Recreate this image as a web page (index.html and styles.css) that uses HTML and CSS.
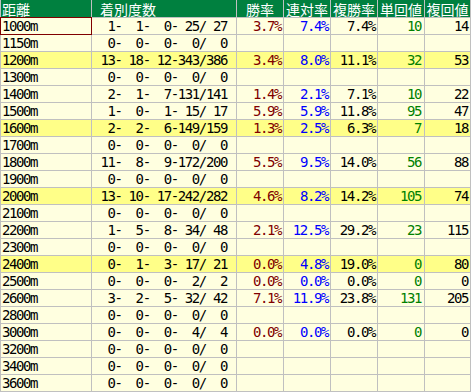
FILE: index.html
```html
<!DOCTYPE html>
<html lang="ja">
<head>
<meta charset="utf-8">
<title>距離別成績</title>
<link rel="stylesheet" href="styles.css">
</head>
<body>
<div class="table">
  <div class="row head">
    <div class="c name">距離</div>
    <div class="c rec">着別度数</div>
    <div class="c hc">勝率</div>
    <div class="c hc">連対率</div>
    <div class="c hc">複勝率</div>
    <div class="c hc">単回値</div>
    <div class="c hc">複回値</div>
  </div>
  <div class="row"><div class="c name sel">1000m</div><div class="c rec"> 1-  1-  0- 25/ 27</div><div class="c num win">3.7%</div><div class="c num ren">7.4%</div><div class="c num">7.4%</div><div class="c num tan">10</div><div class="c num fuk">14</div></div>
  <div class="row"><div class="c name">1150m</div><div class="c rec"> 0-  0-  0-  0/  0</div><div class="c"></div><div class="c"></div><div class="c"></div><div class="c"></div><div class="c"></div></div>
  <div class="row hl"><div class="c name">1200m</div><div class="c rec">13- 18- 12-343/386</div><div class="c num win">3.4%</div><div class="c num ren">8.0%</div><div class="c num">11.1%</div><div class="c num tan">32</div><div class="c num fuk">53</div></div>
  <div class="row"><div class="c name">1300m</div><div class="c rec"> 0-  0-  0-  0/  0</div><div class="c"></div><div class="c"></div><div class="c"></div><div class="c"></div><div class="c"></div></div>
  <div class="row"><div class="c name">1400m</div><div class="c rec"> 2-  1-  7-131/141</div><div class="c num win">1.4%</div><div class="c num ren">2.1%</div><div class="c num">7.1%</div><div class="c num tan">10</div><div class="c num fuk">22</div></div>
  <div class="row"><div class="c name">1500m</div><div class="c rec"> 1-  0-  1- 15/ 17</div><div class="c num win">5.9%</div><div class="c num ren">5.9%</div><div class="c num">11.8%</div><div class="c num tan">95</div><div class="c num fuk">47</div></div>
  <div class="row hl"><div class="c name">1600m</div><div class="c rec"> 2-  2-  6-149/159</div><div class="c num win">1.3%</div><div class="c num ren">2.5%</div><div class="c num">6.3%</div><div class="c num tan">7</div><div class="c num fuk">18</div></div>
  <div class="row"><div class="c name">1700m</div><div class="c rec"> 0-  0-  0-  0/  0</div><div class="c"></div><div class="c"></div><div class="c"></div><div class="c"></div><div class="c"></div></div>
  <div class="row"><div class="c name">1800m</div><div class="c rec">11-  8-  9-172/200</div><div class="c num win">5.5%</div><div class="c num ren">9.5%</div><div class="c num">14.0%</div><div class="c num tan">56</div><div class="c num fuk">88</div></div>
  <div class="row"><div class="c name">1900m</div><div class="c rec"> 0-  0-  0-  0/  0</div><div class="c"></div><div class="c"></div><div class="c"></div><div class="c"></div><div class="c"></div></div>
  <div class="row hl"><div class="c name">2000m</div><div class="c rec">13- 10- 17-242/282</div><div class="c num win">4.6%</div><div class="c num ren">8.2%</div><div class="c num">14.2%</div><div class="c num tan">105</div><div class="c num fuk">74</div></div>
  <div class="row"><div class="c name">2100m</div><div class="c rec"> 0-  0-  0-  0/  0</div><div class="c"></div><div class="c"></div><div class="c"></div><div class="c"></div><div class="c"></div></div>
  <div class="row"><div class="c name">2200m</div><div class="c rec"> 1-  5-  8- 34/ 48</div><div class="c num win">2.1%</div><div class="c num ren">12.5%</div><div class="c num">29.2%</div><div class="c num tan">23</div><div class="c num fuk">115</div></div>
  <div class="row"><div class="c name">2300m</div><div class="c rec"> 0-  0-  0-  0/  0</div><div class="c"></div><div class="c"></div><div class="c"></div><div class="c"></div><div class="c"></div></div>
  <div class="row hl"><div class="c name">2400m</div><div class="c rec"> 0-  1-  3- 17/ 21</div><div class="c num win">0.0%</div><div class="c num ren">4.8%</div><div class="c num">19.0%</div><div class="c num tan">0</div><div class="c num fuk">80</div></div>
  <div class="row"><div class="c name">2500m</div><div class="c rec"> 0-  0-  0-  2/  2</div><div class="c num win">0.0%</div><div class="c num ren">0.0%</div><div class="c num">0.0%</div><div class="c num tan">0</div><div class="c num fuk">0</div></div>
  <div class="row"><div class="c name">2600m</div><div class="c rec"> 3-  2-  5- 32/ 42</div><div class="c num win">7.1%</div><div class="c num ren">11.9%</div><div class="c num">23.8%</div><div class="c num tan">131</div><div class="c num fuk">205</div></div>
  <div class="row"><div class="c name">2800m</div><div class="c rec"> 0-  0-  0-  0/  0</div><div class="c"></div><div class="c"></div><div class="c"></div><div class="c"></div><div class="c"></div></div>
  <div class="row"><div class="c name">3000m</div><div class="c rec"> 0-  0-  0-  4/  4</div><div class="c num win">0.0%</div><div class="c num ren">0.0%</div><div class="c num">0.0%</div><div class="c num tan">0</div><div class="c num fuk">0</div></div>
  <div class="row"><div class="c name">3200m</div><div class="c rec"> 0-  0-  0-  0/  0</div><div class="c"></div><div class="c"></div><div class="c"></div><div class="c"></div><div class="c"></div></div>
  <div class="row"><div class="c name">3400m</div><div class="c rec"> 0-  0-  0-  0/  0</div><div class="c"></div><div class="c"></div><div class="c"></div><div class="c"></div><div class="c"></div></div>
  <div class="row"><div class="c name">3600m</div><div class="c rec"> 0-  0-  0-  0/  0</div><div class="c"></div><div class="c"></div><div class="c"></div><div class="c"></div><div class="c"></div></div>
</div>
</body>
</html>
```
FILE: styles.css
```css
html, body {
  margin: 0;
  padding: 0;
  background: #ffffff;
}

.table {
  width: 471px;
  display: flex;
  flex-direction: column;
  gap: 1px;
  background: #c0c0c0;
  padding-bottom: 1px;
  font-family: "DejaVu Sans Mono", "Liberation Mono", "Noto Sans CJK JP", monospace;
  font-size: 14px;
  letter-spacing: -1.4px;
  color: #000000;
}

.row {
  display: grid;
  grid-template-columns: 90px 144px 46px 46px 46px 46px 45px;
  column-gap: 1px;
  padding: 0 1px;
}

.c {
  height: 16px;
  line-height: 17px;
  background: #ffffe0;
  white-space: pre;
  overflow: visible;
}

.row.hl .c {
  background: #ffff88;
}

.row.head {
  height: 17px;
}

.row.head .c {
  height: 17px;
  background: #00803f;
  color: #ffffff;
  font-family: "Noto Sans CJK JP", sans-serif;
  font-size: 14px;
  letter-spacing: 0;
  line-height: 19px;
}

.row.head .name {
  padding-left: 1px;
}

.row.head .rec {
  text-align: left;
  padding-left: 8px;
  padding-right: 0;
}

.row.head .hc {
  text-align: center;
}

.name {
  padding-left: 1px;
}

.rec {
  text-align: right;
  padding-right: 9px;
}

.num {
  text-align: right;
  padding-right: 2px;
}

.win { color: #800000; }
.ren { color: #0000ff; }
.tan { color: #008000; padding-right: 3px; }
.fuk { color: #000000; padding-right: 2px; }

.sel {
  outline: 1px solid #800000;
}
```
